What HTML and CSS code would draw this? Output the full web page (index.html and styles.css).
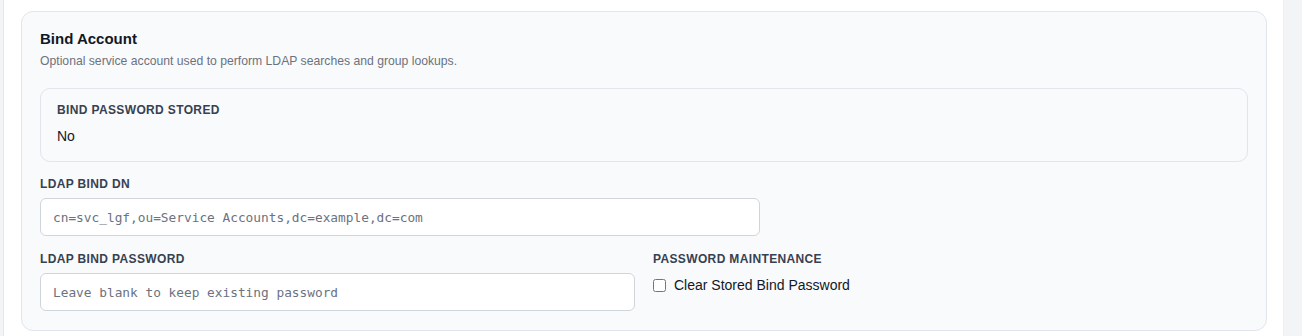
FILE: index.html
```html
<!DOCTYPE html>
<html lang="en">
<head>
<meta charset="utf-8">
<title>Bind Account</title>
<link rel="stylesheet" href="styles.css">
</head>
<body>
<div class="rail"></div>
<main class="panel">
  <section class="card">
    <h2 class="card-title">Bind Account</h2>
    <p class="card-sub">Optional service account used to perform LDAP searches and group lookups.</p>
    <div class="status-box">
      <div class="label">Bind Password Stored</div>
      <div class="status-value">No</div>
    </div>
    <div class="field field-dn">
      <label class="label" for="dn">LDAP Bind DN</label>
      <input id="dn" class="input" type="text" placeholder="cn=svc_lgf,ou=Service Accounts,dc=example,dc=com">
    </div>
    <div class="row">
      <div class="field">
        <label class="label" for="pw">LDAP Bind Password</label>
        <input id="pw" class="input" type="password" placeholder="Leave blank to keep existing password">
      </div>
      <div class="field">
        <div class="label">Password Maintenance</div>
        <label class="check"><input type="checkbox" class="checkbox"><span>Clear Stored Bind Password</span></label>
      </div>
    </div>
  </section>
</main>
<div class="gutter"></div>
</body>
</html>
```

FILE: styles.css
```css
* { box-sizing: border-box; }
html, body { margin: 0; padding: 0; }
body {
  display: flex;
  height: 336px;
  background: #f3f4f6;
  font-family: "Liberation Sans", Arial, sans-serif;
  color: #111827;
  overflow: hidden;
}
.rail {
  width: 4px;
  flex: none;
  background: #f3f4f6;
  border-right: 1px solid #e5e7eb;
}
.panel {
  flex: 1;
  background: #ffffff;
  padding: 11px 16px 0 17px;
}
.gutter {
  width: 19px;
  flex: none;
  background: #f3f4f6;
  border-left: 1px solid #eceef1;
}
.card {
  background: #f9fafb;
  border: 1px solid #e2e5ec;
  border-radius: 12px;
  padding: 17px 18px 19px 18px;
}
.card-title {
  margin: 0;
  font-size: 15px;
  line-height: 20px;
  font-weight: 700;
  color: #111827;
}
.card-sub {
  margin: 4px 0 0 0;
  font-size: 12.2px;
  line-height: 16px;
  color: #6b7280;
}
.status-box {
  margin-top: 19px;
  border: 1px solid #e2e5ec;
  border-radius: 10px;
  padding: 13px 16px 15px 16px;
  background: #f9fafb;
}
.label {
  display: block;
  font-size: 12px;
  line-height: 16px;
  font-weight: 700;
  text-transform: uppercase;
  letter-spacing: 0.03em;
  color: #374151;
}
.status-value {
  margin-top: 8px;
  font-size: 14px;
  line-height: 20px;
  color: #111827;
}
.field {
  display: flex;
  flex-direction: column;
  gap: 6px;
}
.field-dn {
  margin-top: 14px;
  max-width: 720px;
}
.input {
  height: 38px;
  width: 100%;
  border: 1px solid #d1d5db;
  border-radius: 6px;
  background: #ffffff;
  padding: 0 12px;
  font-family: "DejaVu Sans Mono", "Liberation Mono", monospace;
  font-size: 12.8px;
  color: #111827;
}
.input::placeholder {
  color: #6b7280;
}
.row {
  margin-top: 15px;
  display: grid;
  grid-template-columns: 1fr 1fr;
  column-gap: 18px;
}
.check {
  display: flex;
  align-items: center;
  gap: 8px;
  margin-top: 2px;
  font-size: 14px;
  line-height: 20px;
  color: #111827;
}
.checkbox {
  margin: 0;
  width: 13px;
  height: 13px;
}
```
